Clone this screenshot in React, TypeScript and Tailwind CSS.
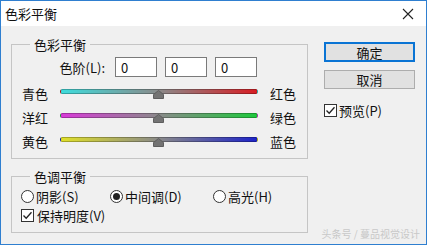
import React from 'react';

const font = { fontFamily: '"Microsoft YaHei", "Noto Sans CJK SC", "Noto Sans", sans-serif' };

const Slider: React.FC<{ left: string; right: string; track: string }> = ({ left, right, track }) => (
  <div className="flex items-center h-[24px]">
    <span className="w-[48px] pl-[10px] whitespace-nowrap">{left}</span>
    <div className="relative w-[198px] h-[5px] mb-[4px]">
      <div className={`h-[5px] rounded-full border border-black/25 ${track}`}></div>
      <svg className="absolute left-[93px] top-[1px]" width="11" height="9" viewBox="0 0 11 9">
        <path d="M5.5 0.5 L10.5 4.5 L10.5 8.5 L0.5 8.5 L0.5 4.5 Z" fill="#737373" stroke="#5e5e5e" strokeWidth="1" />
      </svg>
    </div>
    <span className="ml-[12px] whitespace-nowrap">{right}</span>
  </div>
);

const Check: React.FC = () => (
  <span className="w-[13px] h-[13px] border border-[#333] bg-white flex items-center justify-center shrink-0">
    <svg width="11" height="11" viewBox="0 0 11 11">
      <path d="M1.5 5.5 L4.2 8.3 L9.5 2.2" fill="none" stroke="#222" strokeWidth="1.3" />
    </svg>
  </span>
);

const Radio: React.FC<{ on?: boolean }> = ({ on }) => (
  <span className="w-[13px] h-[13px] rounded-full border border-[#333] bg-white flex items-center justify-center shrink-0">
    {on && <span className="w-[7px] h-[7px] rounded-full bg-[#222]"></span>}
  </span>
);

const App: React.FC = () => {
  return (
    <div style={font} className="relative w-[427px] h-[245px] border border-[#2f7fd0] bg-[#f0f0f0] flex flex-col text-[13px] leading-[17px] text-[#111] overflow-hidden">
      <div className="h-[25px] bg-white flex items-center justify-between pl-[4px] pr-[12px] shrink-0">
        <span>色彩平衡</span>
        <svg width="12" height="12" viewBox="0 0 12 12">
          <path d="M1 1 L11 11 M11 1 L1 11" stroke="#222" strokeWidth="1.1" />
        </svg>
      </div>

      <div className="flex pl-[10px] pr-[11px]">
        <div className="w-[297px] flex flex-col">
          <fieldset className="mt-[10px] border border-[#c5c5c5] h-[123px] px-0">
            <legend className="ml-[18px] px-[4px]">色彩平衡</legend>
            <div className="flex items-center h-[20px] mt-[4px]">
              <span className="w-[96px] text-right pr-[3px]">色阶(L):</span>
              <div className="flex gap-[8px] ml-[7px]">
                {['0', '0', '0'].map((v, i) => (
                  <div key={i} className="w-[42px] h-[20px] bg-white border border-[#7a7a7a] pl-[5px] flex items-center">{v}</div>
                ))}
              </div>
            </div>
            <div className="mt-[4px]">
              <Slider left="青色" right="红色" track="bg-[linear-gradient(to_right,#3edcdc,#8a8a8a_50%,#d81e24)]" />
              <Slider left="洋红" right="绿色" track="bg-[linear-gradient(to_right,#d83ad8,#8a8a8a_50%,#1ec83c)]" />
              <Slider left="黄色" right="蓝色" track="bg-[linear-gradient(to_right,#e0e02a,#8a8a8a_50%,#1e24c8)]" />
            </div>
          </fieldset>

          <fieldset className="mt-[9px] border border-[#c5c5c5] h-[65px] px-0">
            <legend className="ml-[18px] px-[4px]">色调平衡</legend>
            <div className="flex items-center h-[20px] pl-[9px] mt-[1px]">
              <div className="flex items-center gap-[2px] w-[89px]"><Radio /><span>阴影(S)</span></div>
              <div className="flex items-center gap-[2px] w-[103px]"><Radio on /><span>中间调(D)</span></div>
              <div className="flex items-center gap-[2px]"><Radio /><span>高光(H)</span></div>
            </div>
            <div className="flex items-center gap-[3px] h-[19px] pl-[9px]">
              <Check />
              <span>保持明度(V)</span>
            </div>
          </fieldset>
        </div>

        <div className="ml-[16px] flex-1 flex flex-col pt-[16px]">
          <button className="h-[20px] bg-[#e1e1e1] border-2 border-[#0a74d4] flex items-center justify-center">确定</button>
          <button className="mt-[8px] h-[19px] bg-[#e1e1e1] border border-[#adadad] flex items-center justify-center">取消</button>
          <div className="mt-[13px] flex items-center gap-[2px]">
            <Check />
            <span>预览(P)</span>
          </div>
        </div>
      </div>

      <div className="absolute right-[6px] bottom-[2px] text-[10px] text-[#c8c8c8] whitespace-nowrap">头条号 / 蔓品视觉设计</div>
    </div>
  );
};

export default App;
